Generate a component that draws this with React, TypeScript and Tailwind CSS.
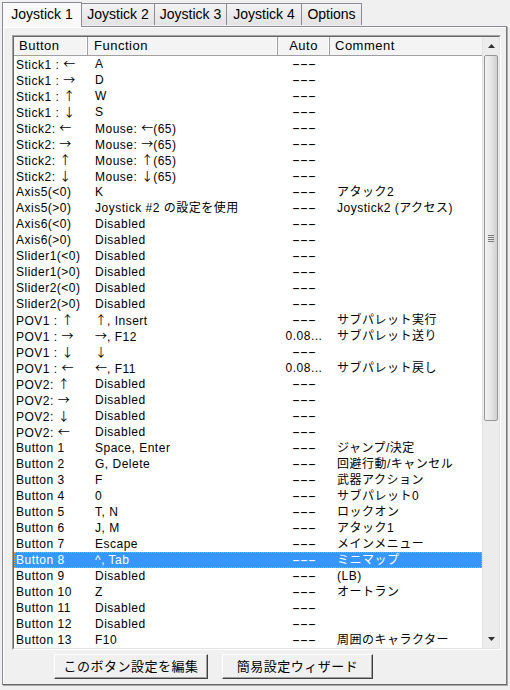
import React from 'react';

type Row = { button: string; fn: string; auto: string; comment: string };

const rows: Row[] = [
  { button: 'Stick1 : ←', fn: 'A', auto: '---', comment: '' },
  { button: 'Stick1 : →', fn: 'D', auto: '---', comment: '' },
  { button: 'Stick1 : ↑', fn: 'W', auto: '---', comment: '' },
  { button: 'Stick1 : ↓', fn: 'S', auto: '---', comment: '' },
  { button: 'Stick2: ←', fn: 'Mouse: ←(65)', auto: '---', comment: '' },
  { button: 'Stick2: →', fn: 'Mouse: →(65)', auto: '---', comment: '' },
  { button: 'Stick2: ↑', fn: 'Mouse: ↑(65)', auto: '---', comment: '' },
  { button: 'Stick2: ↓', fn: 'Mouse: ↓(65)', auto: '---', comment: '' },
  { button: 'Axis5(<0)', fn: 'K', auto: '---', comment: 'アタック2' },
  { button: 'Axis5(>0)', fn: 'Joystick #2 の設定を使用', auto: '---', comment: 'Joystick2 (アクセス)' },
  { button: 'Axis6(<0)', fn: 'Disabled', auto: '---', comment: '' },
  { button: 'Axis6(>0)', fn: 'Disabled', auto: '---', comment: '' },
  { button: 'Slider1(<0)', fn: 'Disabled', auto: '---', comment: '' },
  { button: 'Slider1(>0)', fn: 'Disabled', auto: '---', comment: '' },
  { button: 'Slider2(<0)', fn: 'Disabled', auto: '---', comment: '' },
  { button: 'Slider2(>0)', fn: 'Disabled', auto: '---', comment: '' },
  { button: 'POV1 : ↑', fn: '↑, Insert', auto: '---', comment: 'サブパレット実行' },
  { button: 'POV1 : →', fn: '→, F12', auto: '0.08...', comment: 'サブパレット送り' },
  { button: 'POV1 : ↓', fn: '↓', auto: '---', comment: '' },
  { button: 'POV1 : ←', fn: '←, F11', auto: '0.08...', comment: 'サブパレット戻し' },
  { button: 'POV2: ↑', fn: 'Disabled', auto: '---', comment: '' },
  { button: 'POV2: →', fn: 'Disabled', auto: '---', comment: '' },
  { button: 'POV2: ↓', fn: 'Disabled', auto: '---', comment: '' },
  { button: 'POV2: ←', fn: 'Disabled', auto: '---', comment: '' },
  { button: 'Button 1', fn: 'Space, Enter', auto: '---', comment: 'ジャンプ/決定' },
  { button: 'Button 2', fn: 'G, Delete', auto: '---', comment: '回避行動/キャンセル' },
  { button: 'Button 3', fn: 'F', auto: '---', comment: '武器アクション' },
  { button: 'Button 4', fn: '0', auto: '---', comment: 'サブパレット0' },
  { button: 'Button 5', fn: 'T, N', auto: '---', comment: 'ロックオン' },
  { button: 'Button 6', fn: 'J, M', auto: '---', comment: 'アタック1' },
  { button: 'Button 7', fn: 'Escape', auto: '---', comment: 'メインメニュー' },
  { button: 'Button 8', fn: '^, Tab', auto: '---', comment: 'ミニマップ' },
  { button: 'Button 9', fn: 'Disabled', auto: '---', comment: '(LB)' },
  { button: 'Button 10', fn: 'Z', auto: '---', comment: 'オートラン' },
  { button: 'Button 11', fn: 'Disabled', auto: '---', comment: '' },
  { button: 'Button 12', fn: 'Disabled', auto: '---', comment: '' },
  { button: 'Button 13', fn: 'F10', auto: '---', comment: '周囲のキャラクター' },
];

const tabs = [
  { label: 'Joystick 1', w: 'w-[80px]' },
  { label: 'Joystick 2', w: 'w-[74px]' },
  { label: 'Joystick 3', w: 'w-[73px]' },
  { label: 'Joystick 4', w: 'w-[76px]' },
  { label: 'Options', w: 'w-[61px]' },
];

const SELECTED = 31;

// arrows look tiny in Liberation Sans, so give them the CJK font
function withArrows(text: string) {
  return text.split(/([←→↑↓])/).map((part, i) =>
    /[←→↑↓]/.test(part) ? (
      <span key={i} className="font-['Noto_Sans_CJK_JP'] tracking-normal">
        {part}
      </span>
    ) : (
      <React.Fragment key={i}>{part}</React.Fragment>
    )
  );
}

function AutoValue({ value }: { value: string }) {
  if (value === '---') {
    return <span className="inline-block scale-x-[2] tracking-normal">{value}</span>;
  }
  return <span>{value}</span>;
}

function HeaderCell({ label, className }: { label: string; className: string }) {
  return (
    <div
      className={`h-full flex items-center border-r border-r-[#a0a0a0] shadow-[inset_-1px_0_0_#ffffff] ${className}`}
    >
      {label}
    </div>
  );
}

function ScrollBar() {
  return (
    <div className="w-[17px] h-full flex flex-col bg-[#ececec] border-l border-[#e3e3e3]">
      {/* up arrow */}
      <div className="h-[18px] flex items-center justify-center">
        <svg width="7" height="4" viewBox="0 0 7 4">
          <path d="M3.5 0 L7 4 L0 4 Z" fill="#303030" />
        </svg>
      </div>
      {/* thumb */}
      <div className="h-[366px] mx-[1px] rounded-[2px] border border-[#979797] bg-gradient-to-r from-[#f3f3f3] via-[#e6e6e6] to-[#d0d0d0] flex items-center justify-center">
        <div className="flex flex-col gap-[1px]">
          <div className="w-[6px] h-px bg-[#7a7a7a]" />
          <div className="w-[6px] h-px bg-[#7a7a7a]" />
          <div className="w-[6px] h-px bg-[#7a7a7a]" />
          <div className="w-[6px] h-px bg-[#7a7a7a]" />
        </div>
      </div>
      <div className="flex-1" />
      {/* down arrow */}
      <div className="h-[18px] flex items-center justify-center">
        <svg width="7" height="4" viewBox="0 0 7 4">
          <path d="M0 0 L7 0 L3.5 4 Z" fill="#303030" />
        </svg>
      </div>
    </div>
  );
}

function ClassicButton({ label, width }: { label: string; width: string }) {
  return (
    <button
      className={`${width} h-[25px] bg-[#f0f0f0] border border-t-white border-l-white border-r-[#404040] border-b-[#404040] shadow-[inset_-1px_-1px_0_#a0a0a0] text-[13px] tracking-[0.5px] text-black flex items-center justify-center`}
    >
      {label}
    </button>
  );
}

export default function App() {
  return (
    <div
      className="w-[510px] h-[690px] bg-[#f0f0f0] flex flex-col text-black overflow-hidden"
      style={{ fontFamily: '"Liberation Sans", "Noto Sans CJK JP", sans-serif' }}
    >
      {/* Tabs */}
      <div className="h-[26px] flex items-end pl-[2px] shrink-0">
        {tabs.map((t, i) =>
          i === 0 ? (
            <div
              key={t.label}
              className={`${t.w} h-[25px] -mb-px relative z-10 bg-[#f9f9f9] border border-b-0 border-[#898c95] flex items-center justify-center text-[14px] pb-[2px]`}
            >
              {t.label}
            </div>
          ) : (
            <div
              key={t.label}
              className={`${t.w} h-[22px] mb-[1px] -ml-px bg-gradient-to-b from-[#f3f3f3] to-[#e3e3e3] border border-b-0 border-[#898c95] flex items-center justify-center text-[14px]`}
            >
              {t.label}
            </div>
          )
        )}
      </div>

      {/* Panel */}
      <div className="flex-1 ml-[2px] mr-[3px] mb-[5px] border border-[#898c95] border-b-[#6a6a6a] border-r-[#7a7a7a] shadow-[inset_1px_1px_0_#ffffff,1px_1px_0_#a8a8a8] bg-[#f0f0f0] pt-[8px] pl-[9px] pr-[5px] flex flex-col">
        {/* List view */}
        <div className="h-[615px] border border-t-[#a0a0a0] border-l-[#a0a0a0] border-r-white border-b-white">
          <div className="h-full border border-t-[#696969] border-l-[#696969] border-r-[#e3e3e3] border-b-[#e3e3e3] bg-white flex">
            <div className="flex-1 flex flex-col min-w-0">
              {/* Header */}
              <div className="h-[19px] flex bg-[#f4f4f4] border-b border-[#a0a0a0] text-[13px] tracking-[0.5px] shrink-0">
                <HeaderCell label="Button" className="w-[74px] pl-[5px]" />
                <HeaderCell label="Function" className="w-[190px] pl-[6px]" />
                <HeaderCell label="Auto" className="w-[52px] justify-center" />
                <div className="flex-1 h-full flex items-center pl-[5px]">Comment</div>
              </div>
              {/* Rows */}
              <div className="flex-1 text-[12px] tracking-[0.5px]">
                {rows.map((r, i) => {
                  const sel = i === SELECTED;
                  return (
                    <div
                      key={i}
                      className={
                        sel
                          ? 'h-[16px] flex items-center bg-[#3399ff] text-white outline-1 outline-dotted outline-[#ff9a1f] -outline-offset-1'
                          : 'h-[16px] flex items-center'
                      }
                    >
                      <div className="w-[74px] pl-[2px] whitespace-nowrap">{withArrows(r.button)}</div>
                      <div className="w-[190px] pl-[7px] whitespace-nowrap">{withArrows(r.fn)}</div>
                      <div className="w-[52px] text-center whitespace-nowrap">
                        <AutoValue value={r.auto} />
                      </div>
                      <div className="flex-1 pl-[7px] whitespace-nowrap">{r.comment}</div>
                    </div>
                  );
                })}
              </div>
            </div>
            <ScrollBar />
          </div>
        </div>

        {/* Buttons */}
        <div className="flex gap-[14px] pl-[42px] mt-[4px]">
          <ClassicButton label="このボタン設定を編集" width="w-[154px]" />
          <ClassicButton label="簡易設定ウィザード" width="w-[151px]" />
        </div>
      </div>
    </div>
  );
}
